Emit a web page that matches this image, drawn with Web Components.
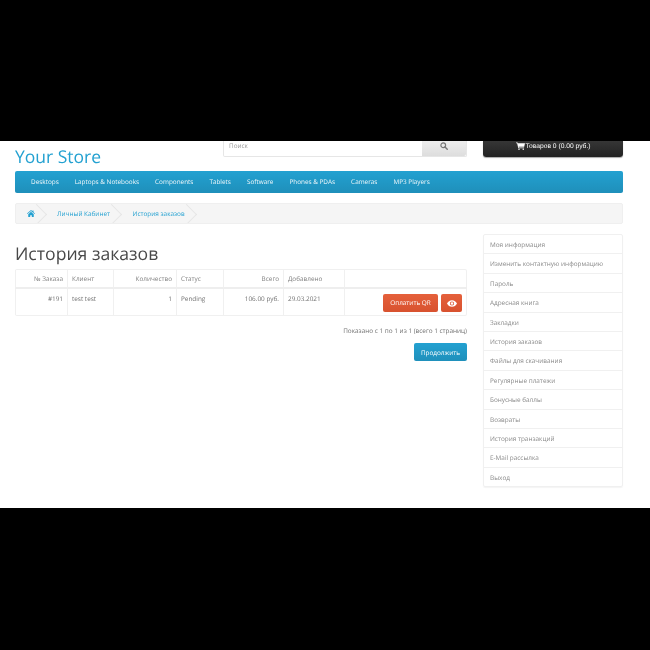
<!DOCTYPE html>
<html>
<head>
<meta charset="utf-8">
<style>
  html, body { margin: 0; padding: 0; background: #000; }
  body { font-family: "Open Sans", sans-serif; text-rendering: geometricPrecision; }
</style>
</head>
<body>
<store-page></store-page>
<script>
const ICONS = {
  search: '<svg viewBox="0 0 16 16" width="8" height="8"><circle cx="6.5" cy="6.5" r="4.7" fill="none" stroke="currentColor" stroke-width="2.4"/><path d="M10 10l4.5 4.5" stroke="currentColor" stroke-width="2.8" stroke-linecap="round"/></svg>',
  cart: '<svg viewBox="0 0 18 16" width="9" height="8"><path fill="currentColor" d="M0 1h3.2l.5 1.6H18l-1.6 7H5.4l.4 1.6h10.4v1.5H4.6L2.2 2.5H0z"/><circle cx="6" cy="14.4" r="1.5" fill="currentColor"/><circle cx="14.5" cy="14.4" r="1.5" fill="currentColor"/></svg>',
  home: '<svg viewBox="0 0 16 14" width="8" height="7"><path fill="currentColor" d="M8 0l3 2.6V1h2v3.3L16 7l-1 1-7-6-7 6-1-1z"/><path fill="currentColor" d="M2.5 8.3L8 3.6l5.5 4.7V14H9.6v-3.6H6.4V14H2.5z"/></svg>',
  eye: '<svg viewBox="0 0 18 12" width="10" height="7"><path fill="currentColor" fill-rule="evenodd" d="M9 0c4 0 7.300 2.500 9 6-1.700 3.500-5 6-9 6s-7.300-2.500-9-6c1.700-3.500 5-6 9-6zm0 2.200a3.800 3.800 0 100 7.600 3.800 3.800 0 000-7.600z"/><circle cx="9" cy="6" r="2.200" fill="currentColor"/></svg>'
};

class StoreHeader extends HTMLElement {
  constructor() {
    super();
    this.attachShadow({ mode: 'open' }).innerHTML = `
      <style>
        :host { display: grid; grid-template-columns: 192px 244px 140px; column-gap: 16px; align-items: end; height: 30px; }
        .logo { font-size: 17.500px; line-height: 24px; color: #23a1d1; margin-bottom: 2px; }
        .search { display: flex; height: 16px; margin-bottom: 14px; background: #fff; border: 1px solid #e6e6e6; border-top: 0; border-radius: 0 0 2px 2px; box-sizing: border-box; }
        .search span { flex: 1; font-size: 6.400px; line-height: 10px; padding-left: 5px; color: #999; }
        .search button { width: 44px; border: 0; padding: 0 0 6px; background: linear-gradient(#eeeeee, #dddddd); color: #777; display: flex; align-items: center; justify-content: center; box-sizing: border-box; border-radius: 0 0 2px 0; }
        .cart { height: 16px; margin-bottom: 14px; padding: 0 0 6px 0; box-sizing: border-box; background: linear-gradient(#363636, #222); border-radius: 0 0 3px 3px; color: #fff; font-family: "Liberation Sans", sans-serif; font-size: 6.700px; display: flex; gap: 1px; align-items: center; justify-content: center; box-shadow: 0 1px 1px #aaa; }
        svg { display: block; }
      </style>
      <div class="logo">Your Store</div>
      <div class="search"><span>Поиск</span><button>${ICONS.search}</button></div>
      <div class="cart">${ICONS.cart}<span>Товаров 0 (0.00 руб.)</span></div>`;
  }
}

class MainNav extends HTMLElement {
  connectedCallback() {
    const items = (this.getAttribute('items') || '').split('|');
    this.attachShadow({ mode: 'open' }).innerHTML = `
      <style>
        :host { display: flex; align-items: center; height: 22px; padding-left: 16px; column-gap: 16px; background: linear-gradient(#23a1d1, #1f90bb); border-bottom: 1px solid #1f90bb; box-sizing: border-box; border-radius: 2px; }
        a { color: #fff; font-size: 6.400px; font-weight: 500; opacity: .93; }
      </style>
      ${items.map(i => `<a>${i}</a>`).join('')}`;
  }
}

class BreadCrumb extends HTMLElement {
  constructor() {
    super();
    this.attachShadow({ mode: 'open' }).innerHTML = `
      <style>
        :host { display: flex; align-items: center; height: 21px; background: #f5f5f5; border: 1px solid #efefef; box-sizing: border-box; border-radius: 2px; overflow: hidden; color: #23a1d1; font-size: 6.400px; }
        .c { position: relative; display: flex; align-items: center; height: 100%; padding: 0 12px 0 10.500px; }
        .c:first-child { padding: 0 12.500px 0 10px; }
        .c::after { content: ""; position: absolute; right: 0; top: 2.500px; width: 14px; height: 14px; border-top: 1px solid #e6e6e6; border-right: 1px solid #e6e6e6; transform: translateX(-3px) rotate(45deg); }
      </style>
      <div class="c">${ICONS.home}</div>
      <div class="c">Личный Кабинет</div>
      <div class="c">История заказов</div>`;
  }
}

class OrderTable extends HTMLElement {
  constructor() {
    super();
    this.attachShadow({ mode: 'open' }).innerHTML = `
      <style>
        :host { display: grid; grid-template-columns: 52px 46px 63px 47px 60px 61px 123px; font-size: 6.400px; color: #707070; border: 1px solid #f0f0f0; border-width: 1px 1px 1px 0; box-sizing: border-box; border-radius: 2px; }
        .h, .d { border-left: 1px solid #f0f0f0; padding: 0 4px; box-sizing: border-box; }
        .h { height: 19px; line-height: 17px; border-bottom: 2px solid #eee; color: #808080; }
        .d { height: 26px; padding-top: 5px; line-height: 10px; }
        .r { text-align: right; }
        .btns { display: flex; justify-content: flex-end; gap: 3px; padding: 5px 5px 0 0; }
        .btn { height: 18px; background: linear-gradient(#e5603b, #d8522f); color: #fff; border-radius: 2px; display: flex; align-items: center; justify-content: center; }
        .qr { width: 55px; }
        .eye { width: 21px; }
        svg { display: block; }
      </style>
      <div class="h r">№ Заказа</div><div class="h">Клиент</div><div class="h r">Количество</div><div class="h">Статус</div><div class="h r">Всего</div><div class="h">Добавлено</div><div class="h"></div>
      <div class="d r">#191</div><div class="d">test test</div><div class="d r">1</div><div class="d">Pending</div><div class="d r">106.00 руб.</div><div class="d">29.03.2021</div>
      <div class="d btns"><div class="btn qr">Оплатить QR</div><div class="btn eye">${ICONS.eye}</div></div>`;
  }
}

class AccountMenu extends HTMLElement {
  connectedCallback() {
    const items = (this.getAttribute('items') || '').split('|');
    this.attachShadow({ mode: 'open' }).innerHTML = `
      <style>
        :host { display: block; border: 1px solid #f0f0f0; border-radius: 2px; box-sizing: border-box; height: 253px; box-shadow: 0 1px 1px #f4f4f4; }
        a { display: block; height: 19.400px; line-height: 20px; padding-left: 6px; font-size: 6.400px; color: #8a8a8a; border-bottom: 1px solid #f0f0f0; box-sizing: border-box; }
        a:last-child { border-bottom: 0; }
      </style>
      ${items.map(i => `<a>${i}</a>`).join('')}`;
  }
}

class StorePage extends HTMLElement {
  constructor() {
    super();
    this.attachShadow({ mode: 'open' }).innerHTML = `
      <style>
        :host { display: flex; flex-direction: column; width: 650px; height: 650px; background: #000; overflow: hidden; }
        .screen { margin-top: 141px; height: 367px; background: #fff; padding: 0 27px 0 15px; box-sizing: border-box; overflow: hidden; display: flex; flex-direction: column; font-family: "Open Sans", sans-serif; filter: blur(.45px); }
        bread-crumb { margin-top: 10px; }
        .cols { display: grid; grid-template-columns: 452px 140px; column-gap: 16px; margin-top: 10px; }
        h1 { font-size: 17.600px; font-weight: 400; line-height: 25px; margin: 8px 0 2px; color: #484848; }
        .pages { text-align: right; font-size: 6.400px; color: #707070; line-height: 10px; margin-top: 10px; }
        .foot { display: flex; justify-content: flex-end; margin-top: 7px; }
        .go { width: 53px; height: 18px; display: flex; align-items: center; justify-content: center; background: linear-gradient(#23a1d1, #1f90bb); color: #fff; font-size: 6.400px; border-radius: 2px; }
      </style>
      <div class="screen">
        <store-header></store-header>
        <main-nav items="Desktops|Laptops &amp; Notebooks|Components|Tablets|Software|Phones &amp; PDAs|Cameras|MP3 Players"></main-nav>
        <bread-crumb></bread-crumb>
        <div class="cols">
          <div>
            <h1>История заказов</h1>
            <order-table></order-table>
            <div class="pages">Показано с 1 по 1 из 1 (всего 1 страниц)</div>
            <div class="foot"><div class="go">Продолжить</div></div>
          </div>
          <account-menu items="Моя информация|Изменить контактную информацию|Пароль|Адресная книга|Закладки|История заказов|Файлы для скачивания|Регулярные платежи|Бонусные баллы|Возвраты|История транзакций|E-Mail рассылка|Выход"></account-menu>
        </div>
      </div>`;
  }
}

customElements.define('store-header', StoreHeader);
customElements.define('main-nav', MainNav);
customElements.define('bread-crumb', BreadCrumb);
customElements.define('order-table', OrderTable);
customElements.define('account-menu', AccountMenu);
customElements.define('store-page', StorePage);
</script>
</body>
</html>
